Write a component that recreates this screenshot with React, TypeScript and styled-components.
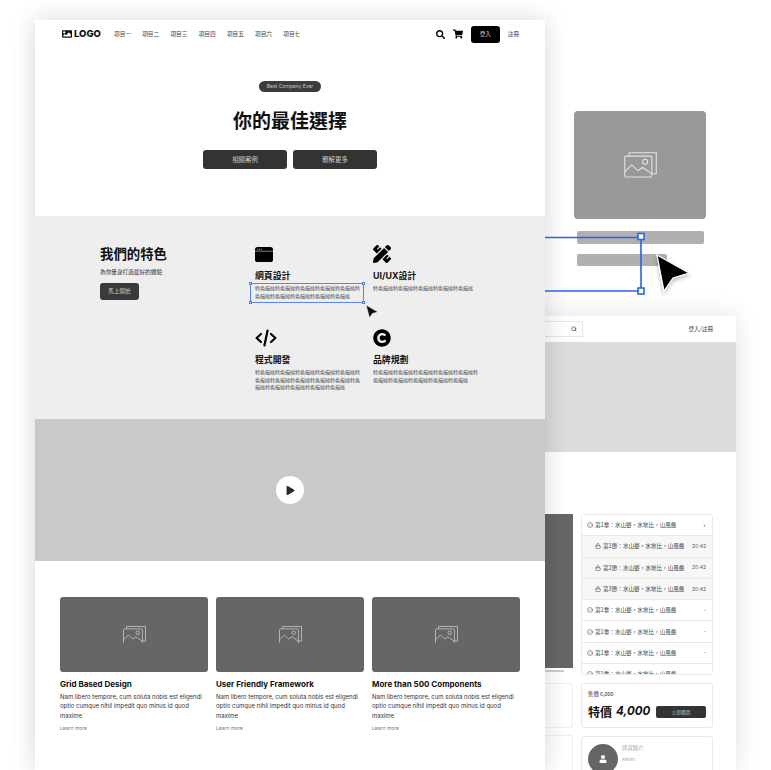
import React from "react";
import styled, { createGlobalStyle } from "styled-components";
import { FaCopyright, FaImage, FaPencilRuler, FaPlay, FaSearch, FaShoppingCart, FaUser } from "react-icons/fa";
import { CircleCheck, Lock, Search } from "lucide-react";

const CJK = `"Noto Sans CJK TC", "Noto Sans", sans-serif`;
const LATIN = `"Inter", "Noto Sans CJK TC", sans-serif`;

const Global = createGlobalStyle`
  html, body { margin: 0; padding: 0; background: #fff; }
  * { box-sizing: border-box; }
`;

const Stage = styled.div`
  position: relative;
  width: 771px;
  height: 770px;
  overflow: hidden;
  background: #fff;
  font-family: ${CJK};
  color: #222;
`;

/* ---------- front window ---------- */
const MainWindow = styled.div`
  position: absolute;
  left: 35px;
  top: 20px;
  width: 510px;
  height: 750px;
  background: #fff;
  box-shadow: 0 0 24px rgba(0, 0, 0, 0.16);
  z-index: 3;
`;
const Header = styled.header`
  display: flex;
  align-items: center;
  height: 28px;
  padding: 0 26px 0 27px;
`;
const Logo = styled.div`
  display: flex;
  align-items: center;
  gap: 2px;
  width: 52px;
  font: 800 9.5px/1 "Inter", sans-serif;
  color: #111;
`;
const Nav = styled.nav`
  display: flex;
  gap: 11.3px;
  flex: 1;
`;
const NavItem = styled.span`
  font-size: 5.65px;
  line-height: 8px;
  color: #444;
`;
const HeaderRight = styled.div`
  display: flex;
  align-items: center;
`;
const IconSlot = styled.span`
  display: flex;
  margin-right: 8px;
  color: #000;
`;
const LoginButton = styled.div`
  width: 29px;
  height: 17px;
  display: flex;
  align-items: center;
  justify-content: center;
  background: #000;
  color: #ddd;
  border-radius: 3px;
  font-size: 5.6px;
`;
const RegisterLink = styled.span`
  margin-left: 8px;
  font-size: 5.6px;
  color: #444;
`;
const Hero = styled.section`
  height: 168px;
  display: flex;
  flex-direction: column;
  align-items: center;
  padding-top: 33px;
`;
const Badge = styled.div`
  width: 62px;
  height: 11px;
  border-radius: 6px;
  background: #3c3c3c;
  color: #c8c8c8;
  font: 400 5px/11px ${LATIN};
  text-align: center;
`;
const HeroTitle = styled.h1`
  margin: 13px 0 0;
  font-size: 19px;
  line-height: 30px;
  font-weight: 700;
  color: #111;
`;
const HeroActions = styled.div`
  display: flex;
  gap: 6px;
  margin-top: 15px;
`;
const HeroButton = styled.div`
  width: 84px;
  height: 19px;
  background: #333;
  border-radius: 3px;
  color: #ccc;
  font-size: 6.4px;
  line-height: 19px;
  text-align: center;
`;
const Features = styled.section`
  height: 203px;
  background: #eee;
  display: flex;
  padding: 29px 0 0 65px;
`;
const FeatureIntro = styled.div`
  width: 155px;
`;
const IntroTitle = styled.h2`
  margin: 0;
  font-size: 13.4px;
  line-height: 16px;
  font-weight: 700;
  color: #111;
`;
const IntroText = styled.p`
  margin: 7px 0 0;
  font-size: 5.65px;
  line-height: 8px;
  color: #333;
`;
const IntroButton = styled.div`
  width: 39px;
  height: 17px;
  margin-top: 7px;
  background: #3a3a3a;
  border-radius: 3px;
  color: #ccc;
  font-size: 5.6px;
  line-height: 17px;
  text-align: center;
`;
const FeatureGrid = styled.div`
  display: grid;
  grid-template-columns: 118px 118px;
  grid-template-rows: 84px auto;
`;
const Feature = styled.div`
  width: 105px;
`;
const FeatureIcon = styled.div`
  height: 18px;
  color: #000;
  display: flex;
  align-items: center;
`;
const FeatureTitle = styled.h3`
  margin: 7px 0 0;
  font: 700 8.9px/12px ${LATIN};
  color: #111;
`;
const FeatureDesc = styled.p`
  position: relative;
  margin: 2px 0 0;
  width: 105.5px;
  font-size: 5px;
  line-height: 7.5px;
  color: #3a3a3a;
  word-break: break-all;
`;
const SelectionBox = styled.span`
  position: absolute;
  left: -5px;
  top: -1px;
  width: 114px;
  height: 20px;
  border: 1px solid #5b84f0;
`;
const Handle = styled.i<{ $x: "l" | "r"; $y: "t" | "b" }>`
  position: absolute;
  width: 3px;
  height: 3px;
  background: #fff;
  border: 1px solid #4d7af0;
  ${(p) => (p.$x === "l" ? "left: -2px;" : "right: -2px;")}
  ${(p) => (p.$y === "t" ? "top: -2px;" : "bottom: -2px;")}
`;
const SmallCursor = styled.svg`
  position: absolute;
  left: 330px;
  top: 284px;
  width: 14px;
  height: 15px;
`;
const Video = styled.section`
  height: 142px;
  background: #c9c9c9;
  display: flex;
  align-items: center;
  justify-content: center;
`;
const PlayCircle = styled.div`
  width: 28px;
  height: 28px;
  border-radius: 50%;
  background: #fff;
  color: #2b2b2b;
  display: flex;
  align-items: center;
  justify-content: center;
  padding-left: 1px;
`;
const Cards = styled.section`
  display: grid;
  grid-template-columns: repeat(3, 148px);
  gap: 8px;
  padding: 36px 0 0 25px;
`;
const Card = styled.article``;
const CardImage = styled.div`
  height: 75px;
  background: #666;
  border-radius: 3px;
  display: flex;
  align-items: center;
  justify-content: center;
`;
const CardTitle = styled.h4`
  margin: 6px 0 0;
  font: 700 8px/12px ${LATIN};
  color: #111;
`;
const CardText = styled.p`
  margin: 2px 0 0;
  font: 400 6px/9.3px ${LATIN};
  color: #333;
`;
const LearnMore = styled.span`
  display: block;
  margin-top: 4px;
  font: 400 5px/8px ${LATIN};
  color: #777;
`;

/* ---------- back window ---------- */
const BackWindow = styled.div`
  position: absolute;
  left: 280px;
  top: 316px;
  width: 456px;
  height: 454px;
  background: #fff;
  box-shadow: 0 0 24px rgba(0, 0, 0, 0.12);
  z-index: 1;
`;
const BackHeader = styled.div`
  height: 26px;
  display: flex;
  align-items: center;
  justify-content: space-between;
  padding: 0 23px 0 100px;
`;
const SearchBox = styled.div`
  width: 203px;
  height: 16px;
  border: 1px solid #e6e6e6;
  display: flex;
  align-items: center;
  justify-content: flex-end;
  padding-right: 5px;
  color: #555;
`;
const AccountLink = styled.span`
  font-size: 5.6px;
  color: #444;
`;
const Banner = styled.div`
  height: 110px;
  background: #dcdcdc;
`;
const BackBody = styled.div`
  display: grid;
  grid-template-columns: 293px 132px;
  gap: 8px;
  padding-top: 62px;
`;
const LeftColumn = styled.div`
  display: flex;
  flex-direction: column;
`;
const BackVideo = styled.div`
  height: 154px;
  background: #666;
`;
const BackBar = styled.div`
  height: 2px;
  width: 284px;
  margin-top: 2px;
  background: #ccc;
`;
const GhostCard = styled.div`
  height: 45px;
  margin-top: 11px;
  border: 1px solid #eee;
  border-radius: 3px;
`;
const GhostTall = styled(GhostCard)`
  height: 60px;
  margin-top: 7px;
`;
const RightColumn = styled.div`
  display: flex;
  flex-direction: column;
  gap: 8px;
`;
const Accordion = styled.div`
  height: 161px;
  overflow: hidden;
  border: 1px solid #eaeaea;
  border-radius: 3px;
`;
const Row = styled.div<{ $sub?: boolean }>`
  height: 21.3px;
  display: flex;
  align-items: center;
  gap: 2px;
  padding: 0 6px 0 ${(p) => (p.$sub ? "13px" : "5px")};
  background: ${(p) => (p.$sub ? "#f7f7f7" : "#fff")};
  border-bottom: 1px solid #e9e9e9;
  font-size: 5.6px;
  color: #444;
`;
const RowText = styled.span`
  flex: 1;
  white-space: nowrap;
`;
const RowTime = styled.span`
  font: 400 5px/1 ${LATIN};
  color: #555;
`;
const PriceCard = styled.div`
  height: 45px;
  border: 1px solid #eaeaea;
  border-radius: 3px;
  padding: 6px 6px 0;
`;
const OldPrice = styled.div`
  font-size: 5.4px;
  line-height: 8px;
  color: #333;
`;
const PriceRow = styled.div`
  display: flex;
  align-items: center;
  margin-top: 5px;
  height: 18px;
`;
const PriceLabel = styled.span`
  flex: none;
  font-size: 12px;
  line-height: 18px;
  font-weight: 700;
  color: #111;
`;
const PriceValue = styled.span`
  flex: none;
  margin-left: 4px;
  font: italic 700 11.5px/1 ${LATIN};
  color: #111;
`;
const BuyButton = styled.div`
  flex: none;
  width: 50px;
  height: 12px;
  margin-left: auto;
  background: #333;
  border-radius: 2px;
  color: #bbb;
  font-size: 4.8px;
  line-height: 12px;
  text-align: center;
`;
const TeacherCard = styled.div`
  height: 60px;
  border: 1px solid #eaeaea;
  border-radius: 3px;
  padding: 7px 6px;
  display: flex;
  gap: 4px;
`;
const Avatar = styled.div`
  width: 30px;
  height: 30px;
  flex: none;
  border-radius: 50%;
  background: #666;
  color: #fff;
  display: flex;
  align-items: center;
  justify-content: center;
`;
const TeacherLabel = styled.div`
  font-size: 5.4px;
  line-height: 8px;
  color: #aaa;
`;
const TeacherName = styled.div`
  margin-top: 3px;
  font: 400 4.8px/8px ${LATIN};
  color: #aaa;
`;

/* ---------- floating widget ---------- */
const Widget = styled.div`
  position: absolute;
  left: 574px;
  top: 111px;
  width: 132px;
  z-index: 2;
`;
const WidgetImage = styled.div`
  height: 108px;
  background: #999;
  border-radius: 4px;
  display: flex;
  align-items: center;
  justify-content: center;
`;
const WidgetBar = styled.div<{ $w: number; $h: number; $mt: number }>`
  width: ${(p) => p.$w}px;
  height: ${(p) => p.$h}px;
  margin: ${(p) => p.$mt}px 0 0 3px;
  background: #b0b0b0;
  border-radius: 2px;
`;
const Connector = styled.svg`
  position: absolute;
  left: 545px;
  top: 230px;
  width: 130px;
  height: 70px;
  z-index: 4;
`;
const BigCursor = styled.svg`
  position: absolute;
  left: 652px;
  top: 250px;
  width: 44px;
  height: 46px;
  z-index: 5;
`;

const PictureIcon = ({ w, color, sw }: { w: number; color: string; sw: number }) => (
  <svg width={w} height={(w * 25) / 32} viewBox="0 0 32 25" fill="none" stroke={color} strokeWidth={sw}>
    <path d="M5 4V0.7H31.3V21H27" />
    <rect x="0.7" y="4" width="26.3" height="20.3" rx="1.5" />
    <path d="M1 19L7.5 12.5L13.5 18L18 15L26.8 21" />
    <circle cx="20.5" cy="9.5" r="2.4" />
  </svg>
);

const BrowserIcon = () => (
  <svg width="18" height="15" viewBox="0 0 18 15">
    <rect width="18" height="15" rx="2.6" fill="#000" />
    <path d="M0 4.2H18" stroke="#ddd" strokeWidth="0.6" />
    <circle cx="2.6" cy="2.2" r="0.5" fill="#ddd" />
    <circle cx="4.4" cy="2.2" r="0.5" fill="#ddd" />
    <circle cx="6.2" cy="2.2" r="0.5" fill="#ddd" />
  </svg>
);

const CodeIcon = () => (
  <svg width="22" height="18" viewBox="0 0 22 18" fill="none" stroke="#000" strokeWidth="2.2" strokeLinecap="round" strokeLinejoin="round">
    <path d="M6 5L1.6 9L6 13" />
    <path d="M16 5L20.4 9L16 13" />
    <path d="M12.6 1.5L9.4 16.5" />
  </svg>
);

const nav = ["項目一", "項目二", "項目三", "項目四", "項目五", "項目六", "項目七"];
const desc = "特色描述".repeat(15);
const rows = [
  { t: "第1章：水山蹇，水地比，山風蠱", r: "+" },
  { t: "第1節：水山蹇，水地比，山風蠱", sub: true },
  { t: "第2節：水山蹇，水地比，山風蠱", sub: true },
  { t: "第3節：水山蹇，水地比，山風蠱", sub: true },
  { t: "第1章：水山蹇，水地比，山風蠱", r: "-" },
  { t: "第1章：水山蹇，水地比，山風蠱", r: "-" },
  { t: "第1章：水山蹇，水地比，山風蠱", r: "-" },
  { t: "第1章：水山蹇，水地比，山風蠱", r: "-" },
];
const cards = ["Grid Based Design", "User Friendly Framework", "More than 500 Components"];

export default function App() {
  return (
    <Stage>
      <Global />
      <BackWindow>
        <BackHeader>
          <SearchBox>
            <Search size={6} strokeWidth={3} />
          </SearchBox>
          <AccountLink>登入/註冊</AccountLink>
        </BackHeader>
        <Banner />
        <BackBody>
          <LeftColumn>
            <BackVideo />
            <BackBar />
            <GhostCard />
            <GhostTall />
          </LeftColumn>
          <RightColumn>
            <Accordion>
              {rows.map((r, i) => (
                <Row key={i} $sub={r.sub}>
                  {r.sub ? <Lock size={6} /> : <CircleCheck size={6} />}
                  <RowText>{r.t}</RowText>
                  {r.sub ? <RowTime>20:42</RowTime> : <RowTime>{r.r}</RowTime>}
                </Row>
              ))}
            </Accordion>
            <PriceCard>
              <OldPrice>售價 6,000</OldPrice>
              <PriceRow>
                <PriceLabel>特價</PriceLabel>
                <PriceValue>4,000</PriceValue>
                <BuyButton>立即購買</BuyButton>
              </PriceRow>
            </PriceCard>
            <TeacherCard>
              <Avatar>
                <FaUser size={8} />
              </Avatar>
              <div>
                <TeacherLabel>師資簡介</TeacherLabel>
                <TeacherName>salvin</TeacherName>
              </div>
            </TeacherCard>
          </RightColumn>
        </BackBody>
      </BackWindow>

      <Widget>
        <WidgetImage>
          <PictureIcon w={33} color="#e4e4e4" sw={1} />
        </WidgetImage>
        <WidgetBar $w={127} $h={13} $mt={12} />
        <WidgetBar $w={90} $h={12} $mt={10} />
      </Widget>

      <MainWindow>
        <Header>
          <Logo>
            <FaImage size={10} />
            LOGO
          </Logo>
          <Nav>
            {nav.map((n) => (
              <NavItem key={n}>{n}</NavItem>
            ))}
          </Nav>
          <HeaderRight>
            <IconSlot>
              <FaSearch size={9} />
            </IconSlot>
            <IconSlot>
              <FaShoppingCart size={10} />
            </IconSlot>
            <LoginButton>登入</LoginButton>
            <RegisterLink>註冊</RegisterLink>
          </HeaderRight>
        </Header>
        <Hero>
          <Badge>Best Company Ever</Badge>
          <HeroTitle>你的最佳選擇</HeroTitle>
          <HeroActions>
            <HeroButton>相關案例</HeroButton>
            <HeroButton>瞭解更多</HeroButton>
          </HeroActions>
        </Hero>
        <Features>
          <FeatureIntro>
            <IntroTitle>我們的特色</IntroTitle>
            <IntroText>為你量身打造最好的體驗</IntroText>
            <IntroButton>馬上開始</IntroButton>
          </FeatureIntro>
          <FeatureGrid>
            <Feature>
              <FeatureIcon>
                <BrowserIcon />
              </FeatureIcon>
              <FeatureTitle>網頁設計</FeatureTitle>
              <FeatureDesc>
                {desc.slice(0, 40)}
                <SelectionBox>
                  <Handle $x="l" $y="t" />
                  <Handle $x="r" $y="t" />
                  <Handle $x="l" $y="b" />
                  <Handle $x="r" $y="b" />
                </SelectionBox>
              </FeatureDesc>
            </Feature>
            <Feature>
              <FeatureIcon>
                <FaPencilRuler size={18} />
              </FeatureIcon>
              <FeatureTitle>UI/UX設計</FeatureTitle>
              <FeatureDesc>{desc.slice(0, 20)}</FeatureDesc>
            </Feature>
            <Feature>
              <FeatureIcon>
                <CodeIcon />
              </FeatureIcon>
              <FeatureTitle>程式開發</FeatureTitle>
              <FeatureDesc>{desc.slice(0, 60)}</FeatureDesc>
            </Feature>
            <Feature>
              <FeatureIcon>
                <FaCopyright size={18} />
              </FeatureIcon>
              <FeatureTitle>品牌規劃</FeatureTitle>
              <FeatureDesc>{desc.slice(0, 40)}</FeatureDesc>
            </Feature>
          </FeatureGrid>
        </Features>
        <Video>
          <PlayCircle>
            <FaPlay size={9} />
          </PlayCircle>
        </Video>
        <Cards>
          {cards.map((c) => (
            <Card key={c}>
              <CardImage>
                <PictureIcon w={23} color="#d0d0d0" sw={1} />
              </CardImage>
              <CardTitle>{c}</CardTitle>
              <CardText>Nam libero tempore, cum soluta nobis est eligendi optio cumque nihil impedit quo minus id quod maxime</CardText>
              <LearnMore>Learn more</LearnMore>
            </Card>
          ))}
        </Cards>
        <SmallCursor viewBox="0 0 14 15">
          <path d="M1 1L13 8L7.5 9.5L4.5 14Z" fill="#111" stroke="#fff" strokeWidth="0.6" />
        </SmallCursor>
      </MainWindow>

      <Connector viewBox="0 0 130 70">
        <path d="M0 7.5H96V61H0" fill="none" stroke="#2a62f0" strokeWidth="1.6" />
        <rect x="93" y="3.5" width="6" height="6" fill="#fff" stroke="#2a62f0" strokeWidth="1.6" />
        <rect x="93" y="58" width="6" height="6" fill="#fff" stroke="#2a62f0" strokeWidth="1.6" />
      </Connector>
      <BigCursor viewBox="0 0 44 46">
        <defs>
          <filter id="cursorShadow" x="-30%" y="-30%" width="160%" height="160%">
            <feDropShadow dx="0" dy="2" stdDeviation="2" floodOpacity="0.3" />
          </filter>
        </defs>
        <path d="M5 5L37 23L21 28L12 41Z" fill="#000" stroke="#fff" strokeWidth="1.2" filter="url(#cursorShadow)" />
      </BigCursor>
    </Stage>
  );
}
